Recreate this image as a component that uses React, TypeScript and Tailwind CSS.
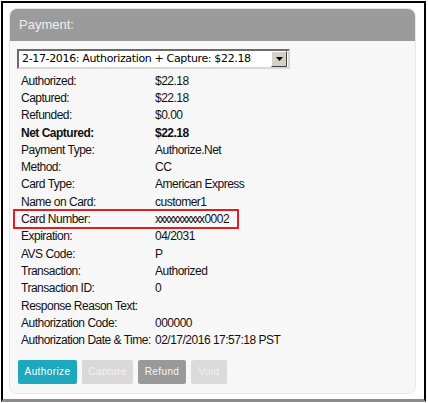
const rows: [string, string, boolean?][] = [
  ["Authorized:", "$22.18"],
  ["Captured:", "$22.18"],
  ["Refunded:", "$0.00"],
  ["Net Captured:", "$22.18", true],
  ["Payment Type:", "Authorize.Net"],
  ["Method:", "CC"],
  ["Card Type:", "American Express"],
  ["Name on Card:", "customer1"],
  ["Card Number:", "xxxxxxxxxxx0002"],
  ["Expiration:", "04/2031"],
  ["AVS Code:", "P"],
  ["Transaction:", "Authorized"],
  ["Transaction ID:", "0"],
  ["Response Reason Text:", ""],
  ["Authorization Code:", "000000"],
  ["Authorization Date & Time:", "02/17/2016 17:57:18 PST"],
];

function Row({ label, value, bold }: { label: string; value: string; bold?: boolean }) {
  if (label === "Card Number:") {
    return (
      <div className="-my-[1px] -ml-[8px] flex h-[19.3px] w-[226px] items-center border-2 border-[#e11d1d] pl-[6px]">
        <span className="w-[134px] shrink-0 whitespace-nowrap">{label}</span>
        <span className="whitespace-nowrap">
          <span className="tracking-[-1.6px]">xxxxxxxxxxx</span>
          <span className="pl-[1px]">0002</span>
        </span>
      </div>
    );
  }
  return (
    <div className={`flex h-[17.3px] items-center ${bold ? "font-bold" : ""}`}>
      <span className="w-[134px] shrink-0 whitespace-nowrap">{label}</span>
      <span className="whitespace-nowrap">{value}</span>
    </div>
  );
}

export default function App() {
  return (
    <div className="h-[403px] w-[428px] bg-white pl-[1px] pt-[1px]">
      <div className="h-[401px] w-[425px] border-x-2 border-t-2 border-b-[3px] border-x-black border-t-black border-b-[#8c8c8c] bg-white px-[6px] pt-[5px]">
        <div className="h-[386px] w-[407px] overflow-hidden rounded-[8px] border border-[#e6e6e6] bg-[#f7f7f7]">
          <div
            className="flex h-[32px] items-center bg-[#9b9b9b] pl-[9px] text-[13px] text-[#efefef]"
            style={{ fontFamily: '"Liberation Sans", Arial, sans-serif' }}
          >
            Payment:
          </div>
          <div className="pl-[7px] pt-[8px]">
            <div
              className="flex h-[20px] w-[273px] items-center border-2 border-t-[#6b6b6b] border-l-[#6b6b6b] border-r-[#d8d8d8] border-b-[#d8d8d8] bg-white text-[11px] text-black"
              style={{ fontFamily: '"DejaVu Sans", Verdana, sans-serif' }}
            >
              <span className="flex-1 whitespace-nowrap pl-[3px] tracking-[-0.35px]">
                2-17-2016: Authorization + Capture: $22.18
              </span>
              <span className="mr-[1px] flex h-[16px] w-[16px] items-center justify-center border border-t-white border-l-white border-r-[#404040] border-b-[#404040] bg-[#d4d0c8]">
                <svg width="7" height="4" viewBox="0 0 7 4">
                  <path d="M0 0h7L3.5 4z" fill="#000" />
                </svg>
              </span>
            </div>
            <div
              className="mt-[3px] pl-[4px] text-[12px] tracking-[-0.5px] text-[#111]"
              style={{ fontFamily: '"Liberation Sans", Arial, sans-serif' }}
            >
              {rows.map(([l, v, b]) => (
                <Row key={l} label={l} value={v} bold={b} />
              ))}
            </div>
            <div
              className="mt-[11px] flex gap-[5px] pl-[1px] text-[10px] tracking-[0.4px]"
              style={{ fontFamily: '"Liberation Sans", Arial, sans-serif' }}
            >
              <button className="h-[24px] w-[59px] rounded-[2px] bg-[#1da8be] text-white">Authorize</button>
              <button className="h-[24px] w-[51px] rounded-[2px] bg-[#d9d9d9] text-[#f2f2f2]">Capture</button>
              <button className="h-[24px] w-[48px] rounded-[2px] bg-[#999999] text-[#f5f5f5]">Refund</button>
              <button className="h-[24px] w-[36px] rounded-[2px] bg-[#dadada] text-[#f2f2f2]">Void</button>
            </div>
          </div>
        </div>
      </div>
    </div>
  );
}
